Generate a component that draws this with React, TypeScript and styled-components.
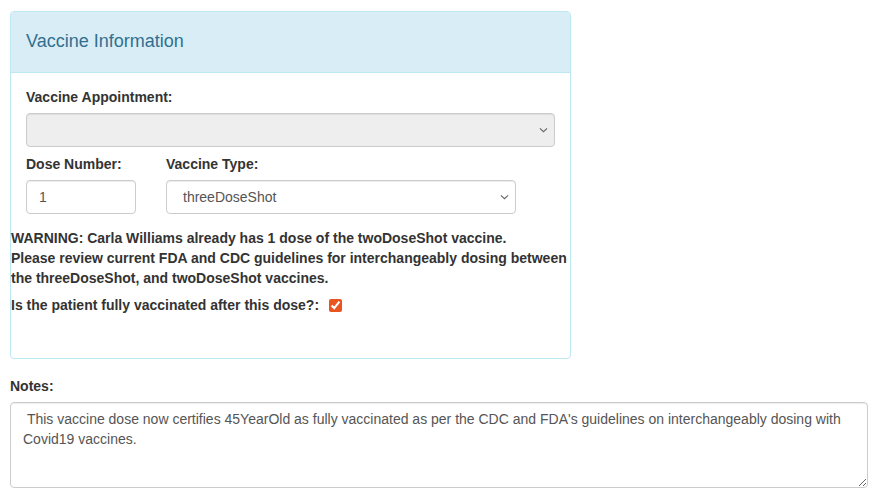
import React from "react";
import styled, { createGlobalStyle } from "styled-components";

const Global = createGlobalStyle`
  html, body { margin: 0; padding: 0; background: #fff; }
  body {
    font-family: "Liberation Sans", Arial, Helvetica, sans-serif;
    font-size: 14px;
    line-height: 20px;
    color: #333;
  }
  * { box-sizing: border-box; }
`;

const chevron =
  "url(\"data:image/svg+xml;utf8,<svg xmlns='http://www.w3.org/2000/svg' width='9' height='6' viewBox='0 0 9 6'><path d='M0.9 1.3 L4.5 4.7 L8.1 1.3' fill='none' stroke='%23666' stroke-width='1.1'/></svg>\")";

const Page = styled.div`
  padding: 11px 0 0 10px;
  width: 868px;
`;

const Panel = styled.section`
  width: 561px;
  border: 1px solid #bce8f1;
  border-radius: 4px;
  background: #fff;
`;

const PanelHeading = styled.header`
  background: #d9edf7;
  border-bottom: 1px solid #bce8f1;
  border-radius: 3px 3px 0 0;
  padding: 20px 15px 22px 15px;
`;

const PanelTitle = styled.h3`
  margin: 0;
  font-size: 18px;
  line-height: 18px;
  font-weight: 400;
  color: #31708f;
`;

const PanelBody = styled.div`
  padding: 15px 15px 0 15px;
`;

const Label = styled.label`
  display: block;
  font-weight: 700;
  color: #333;
  line-height: 18px;
  margin-bottom: 7px;
`;

const FormGroup = styled.div`
  margin-bottom: 8px;
`;

const Row = styled.div`
  display: flex;
  gap: 30px;
`;

const Field = styled.div<{ $w: number }>`
  width: ${(p) => p.$w}px;
`;

const Control = styled.input`
  display: block;
  width: 100%;
  height: 34px;
  padding: 6px 12px;
  font-family: inherit;
  font-size: 14px;
  line-height: 20px;
  color: #555;
  background: #fff;
  border: 1px solid #ccc;
  border-radius: 4px;
  box-shadow: inset 0 1px 1px rgba(0, 0, 0, 0.075);
  outline: none;
`;

const SelectControl = styled.select`
  display: block;
  width: 100%;
  height: 34px;
  padding: 6px 24px 6px 16px;
  font-family: inherit;
  font-size: 14px;
  line-height: 20px;
  color: #555;
  appearance: none;
  -webkit-appearance: none;
  background-color: #fff;
  background-image: ${chevron};
  background-repeat: no-repeat;
  background-position: right 6px center;
  border: 1px solid #ccc;
  border-radius: 4px;
  box-shadow: inset 0 1px 1px rgba(0, 0, 0, 0.075);
  outline: none;
  &:disabled {
    background-color: #eee;
    opacity: 1;
  }
`;

const Warning = styled.div`
  margin: 14px -15px 0 -15px;
  font-weight: 700;
  color: #333;
`;

const CheckRow = styled.div`
  margin: 7px -15px 0 -15px;
  display: flex;
  align-items: center;
  font-weight: 700;
  height: 20px;
  padding-bottom: 43px;
  box-sizing: content-box;
`;

const Check = styled.input`
  width: 13px;
  height: 13px;
  margin: 0 0 0 10px;
  accent-color: #e95420;
`;

const NotesLabel = styled.label`
  display: block;
  font-weight: 700;
  margin: 17px 0 6px 0;
`;

const Notes = styled.textarea`
  display: block;
  width: 858px;
  height: 86px;
  padding: 6px 12px;
  font-family: inherit;
  font-size: 14px;
  line-height: 20px;
  color: #555;
  border: 1px solid #ccc;
  border-radius: 4px;
  box-shadow: inset 0 1px 1px rgba(0, 0, 0, 0.075);
  resize: both;
  outline: none;
`;

export default function App() {
  return (
    <>
      <Global />
      <Page>
        <Panel>
          <PanelHeading>
            <PanelTitle>Vaccine Information</PanelTitle>
          </PanelHeading>
          <PanelBody>
            <FormGroup>
              <Label>Vaccine Appointment:</Label>
              <SelectControl disabled defaultValue="">
                <option value=""></option>
              </SelectControl>
            </FormGroup>
            <Row>
              <Field $w={110}>
                <Label>Dose Number:</Label>
                <Control defaultValue="1" />
              </Field>
              <Field $w={350}>
                <Label>Vaccine Type:</Label>
                <SelectControl defaultValue="threeDoseShot">
                  <option value="threeDoseShot">threeDoseShot</option>
                  <option value="twoDoseShot">twoDoseShot</option>
                </SelectControl>
              </Field>
            </Row>
            <Warning>
              WARNING: Carla Williams already has 1 dose of the twoDoseShot vaccine.
              <br />
              Please review current FDA and CDC guidelines for interchangeably dosing between
              the threeDoseShot, and twoDoseShot vaccines.
            </Warning>
            <CheckRow>
              Is the patient fully vaccinated after this dose?:
              <Check type="checkbox" defaultChecked />
            </CheckRow>
          </PanelBody>
        </Panel>
        <NotesLabel>Notes:</NotesLabel>
        <Notes
          defaultValue=" This vaccine dose now certifies 45YearOld as fully vaccinated as per the CDC and FDA's guidelines on interchangeably dosing with Covid19 vaccines."
        />
      </Page>
    </>
  );
}
